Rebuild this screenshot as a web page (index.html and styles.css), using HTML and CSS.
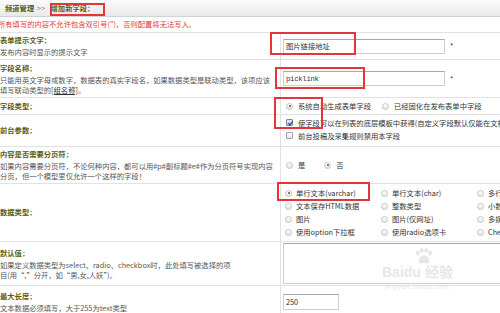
FILE: index.html
```html
<!DOCTYPE html>
<html lang="zh-CN">
<head>
  <meta charset="UTF-8" />
  <title>增加新字段</title>
  <link rel="stylesheet" href="styles.css">
</head>
<body>
  <!-- BREADCRUMB -->
  <div class="crumb">
    <span class="crumb-home">频道管理</span>
    <span class="crumb-sep">&gt;&gt;</span>
    <span class="crumb-cur">增加新字段：</span>
  </div>

  <div class="notice">所有填写的内容不允许包含双引号(")，否则配置将无法写入。</div>

  <!-- FORM ROWS -->
  <div class="form">
    <div class="row r-tip">
      <div class="label">
        <b>表单提示文字：</b>
        <p>发布内容时显示的提示文字</p>
      </div>
      <div class="field">
        <input class="text" type="text" value="图片链接地址"><span class="req">*</span>
      </div>
    </div>

    <div class="row r-name">
      <div class="label">
        <b>字段名称：</b>
        <p>只能用英文字母或数字，数据表的真实字段名，如果数据类型是联动类型，该项应该<br>填写联动类型的<u>[组名称]</u>。</p>
      </div>
      <div class="field">
        <input class="text mono" type="text" value="picklink"><span class="req">*</span>
      </div>
    </div>

    <div class="row r-kind">
      <div class="label"><b>字段类型：</b></div>
      <div class="field">
        <span class="opt"><span class="radio on"></span>系统自动生成表单字段</span>
        <span class="opt opt-far"><span class="radio"></span>已经固化在发布表单中字段</span>
      </div>
    </div>

    <div class="row r-front">
      <div class="label"><b>前台参数：</b></div>
      <div class="field stack">
        <span class="opt"><span class="check on"></span>使字段可以在列表的底层模板中获得(自定义字段默认仅能在文档页中获得)</span>
        <span class="opt"><span class="check"></span>前台投稿及采集规则禁用本字段</span>
      </div>
    </div>

    <div class="row r-page">
      <div class="label">
        <b>内容是否需要分页符：</b>
        <p>如果内容需要分页符，不论何种内容，都可以用#p#副标题#e#作为分页符号实现内容<br>分页，但一个模型里仅允许一个这样的字段！</p>
      </div>
      <div class="field">
        <span class="opt"><span class="radio"></span>是</span>
        <span class="opt opt-no"><span class="radio on"></span>否</span>
      </div>
    </div>

    <div class="row r-type">
      <div class="label"><b>数据类型：</b></div>
      <div class="field">
        <div class="types">
          <span class="opt"><span class="radio on"></span>单行文本(varchar)</span>
          <span class="opt"><span class="radio"></span>单行文本(char)</span>
          <span class="opt"><span class="radio"></span>多行文本</span>
          <span class="opt"><span class="radio"></span>文本保存HTML数据</span>
          <span class="opt"><span class="radio"></span>整数类型</span>
          <span class="opt"><span class="radio"></span>小数类型</span>
          <span class="opt"><span class="radio"></span>图片</span>
          <span class="opt"><span class="radio"></span>图片(仅网址)</span>
          <span class="opt"><span class="radio"></span>多媒体文件</span>
          <span class="opt"><span class="radio"></span>使用option下拉框</span>
          <span class="opt"><span class="radio"></span>使用radio选项卡</span>
          <span class="opt"><span class="radio"></span>Checkbox多选框</span>
        </div>
      </div>
    </div>

    <div class="row r-default">
      <div class="label">
        <b>默认值：</b>
        <p>如果定义数据类型为select、radio、checkbox时，此处填写被选择的项<br>目(用“,”分开，如“男,女,人妖”)。</p>
      </div>
      <div class="field top">
        <textarea class="area"></textarea>
      </div>
    </div>

    <div class="row r-max">
      <div class="label">
        <b>最大长度：</b>
        <p>文本数据必须填写，大于255为text类型</p>
      </div>
      <div class="field">
        <input class="text short" type="text" value="250">
      </div>
    </div>
  </div>

  <!-- WATERMARK -->
  <div class="watermark">
    <div class="wm-logo">Bai<svg class="wm-paw" viewBox="0 0 24 18" width="22" height="16">
        <ellipse cx="5" cy="6" rx="2.2" ry="2.8"/>
        <ellipse cx="9.5" cy="2.8" rx="2.2" ry="2.6"/>
        <ellipse cx="14.5" cy="2.8" rx="2.2" ry="2.6"/>
        <ellipse cx="19" cy="6" rx="2.2" ry="2.8"/>
        <path d="M12 8c-3 0-6 4-6 7 0 2 2 2.5 3 2.5s2-.5 3-.5 2 .5 3 .5 3-.5 3-2.5c0-3-3-7-6-7z"/>
      </svg>du 经验</div>
    <div class="wm-url">jingyan.baidu.com</div>
  </div>

  <!-- ANNOTATION BOXES -->
  <div class="mark mark-crumb"></div>
  <div class="mark mark-tip"></div>
  <div class="mark mark-name"></div>
  <div class="mark mark-kind"></div>
  <div class="mark mark-type"></div>
</body>
</html>
```

FILE: styles.css
```css
/* ---------- BASE ---------- */
*{margin:0;padding:0;box-sizing:border-box;}
html,body{
  width:500px;height:313px;overflow:hidden;
  background:#fff;
  font-family:"Noto Sans CJK SC","Noto Sans",sans-serif;
  font-size:7.3px;
  color:#444;
  position:relative;
}

/* ---------- BREADCRUMB ---------- */
.crumb{
  height:17px;
  padding-left:5px;
  line-height:16px;
  background:linear-gradient(#fbfbfb,#e9e9e9);
  border-bottom:1px solid #d2d2d2;
  white-space:nowrap;
}
.crumb-home,.crumb-cur{color:#55600f;font-weight:700;}
.crumb-sep{color:#888;margin:0 4px 0 1px;}

.notice{
  height:16px;
  line-height:15px;
  margin-left:-2px;
  color:#e3392e;
  border-bottom:1px solid #e2e2e2;
  white-space:nowrap;
}

/* ---------- FORM ROWS ---------- */
.row{display:flex;border-bottom:1px solid #e2e2e2;}
.label{
  width:281px;flex:none;
  border-right:1px solid #e2e2e2;
  display:flex;flex-direction:column;justify-content:center;
  line-height:11px;
  white-space:nowrap;overflow:hidden;
}
.label b{color:#5c5a0c;font-weight:700;}
.label p{color:#555;line-height:10px;margin-top:1px;}
.label u{color:#333;}
.field{
  flex:1;
  padding-left:2px;
  display:flex;align-items:center;
  white-space:nowrap;
  color:#333;
}
.field.top{align-items:flex-start;padding-top:1px;}
.field.stack{flex-direction:column;align-items:flex-start;justify-content:flex-start;padding-top:1px;}

.r-tip{height:27px;}
.r-name{height:38px;}
.r-kind{height:17px;}
.r-front{height:32px;}
.r-page{height:37px;}
.r-type{height:58px;}
.r-default{height:44px;}
.r-max{height:32px;}

/* ---------- INPUTS ---------- */
.text{
  width:162px;height:15px;
  padding:0 2px;
  font:inherit;color:#333;
  border:1px solid #cfcfcf;border-top-color:#a8a8a8;
  background:#fff;
  outline:none;
}
.text.mono{font-family:"Liberation Mono",monospace;letter-spacing:-.3px;}
.text.short{width:56px;height:16px;}
.req{margin-left:5px;color:#333;}
.area{
  width:300px;height:41px;
  border:1px solid #cfcfcf;border-top-color:#a8a8a8;
  resize:none;
}

/* ---------- RADIO / CHECKBOX ---------- */
.opt{display:flex;align-items:center;height:13px;}
.opt-far{margin-left:8px;}
.opt-no{margin-left:16px;}
.radio,.check{
  flex:none;
  width:7px;height:7px;
  margin:0 5px 0 3px;
  border:1px solid #c4c4c4;
  background:linear-gradient(#fff,#e4e4e4);
  position:relative;
}
.radio{border-radius:50%;}
.radio.on::after{
  content:'';
  position:absolute;left:1.5px;top:1.5px;
  width:2px;height:2px;border-radius:50%;
  background:#555;
}
.check{border-radius:1px;border-color:#9aa6b8;}
.check.on{background:linear-gradient(#dfe9f7,#b9cbe6);border-color:#6f86a8;}
.check.on::after{
  content:'';
  position:absolute;left:1.5px;top:0;
  width:2px;height:4px;
  border:solid #1f3f78;border-width:0 1.2px 1.2px 0;
  transform:rotate(40deg);
}

.types{
  display:grid;
  grid-template-columns:96px 96px auto;
  grid-auto-rows:13px;
}
.types .radio{margin:0 4px 0 2px;}

/* ---------- WATERMARK ---------- */
.watermark{
  position:absolute;left:382px;top:256px;
  color:rgba(200,200,200,.45);
  font-family:"Liberation Sans",sans-serif;
  pointer-events:none;
}
.wm-logo{font-size:14px;line-height:16px;font-weight:700;position:relative;top:8px;white-space:nowrap;}
.wm-paw{position:absolute;left:31px;top:-16px;fill:rgba(200,200,200,.45);}
.wm-url{font-size:7.5px;line-height:10px;margin-top:10px;margin-left:3px;letter-spacing:.2px;}

/* ---------- RED ANNOTATIONS ---------- */
.mark{position:absolute;border:2px solid #e2363c;}
.mark-crumb{left:50px;top:3px;width:55px;height:13px;}
.mark-tip{left:270px;top:32px;width:86px;height:23px;}
.mark-name{left:275px;top:67px;width:90px;height:22px;}
.mark-kind{left:274px;top:97px;width:49px;height:32px;}
.mark-type{left:277px;top:182px;width:93px;height:19px;}
```
